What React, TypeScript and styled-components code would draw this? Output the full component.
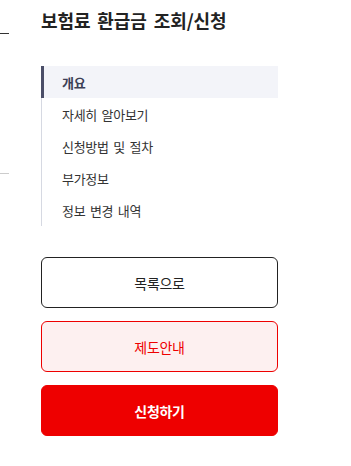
import { createGlobalStyle, styled } from "styled-components";

const GlobalStyle = createGlobalStyle`
  body {
    margin: 0;
    background: #fff;
    font-family: "Noto Sans CJK KR", "Noto Sans", sans-serif;
    color: #222;
  }
`;

const Page = styled.div`
  display: flex;
  align-items: flex-start;
  width: 351px;
  height: 466px;
  overflow: hidden;
`;

// cut-off edge of a side menu that sits left of the viewport
const Rail = styled.div`
  width: 9px;
  display: flex;
  flex-direction: column;
`;

const RailLine = styled.div<{ $top: number; $color: string }>`
  margin-top: ${(p) => p.$top}px;
  height: 1px;
  background: ${(p) => p.$color};
`;

const Main = styled.div`
  margin-left: 32px;
  width: 237px;
  display: flex;
  flex-direction: column;
`;

const Title = styled.h1`
  margin: 0;
  padding-top: 7px;
  font-size: 18px;
  line-height: 26px;
  font-weight: 700;
  letter-spacing: -0.1px;
  word-spacing: 3px;
  color: #222;
  white-space: nowrap;
`;

const Nav = styled.ul`
  list-style: none;
  margin: 33px 0 0;
  padding: 0;
`;

const NavItem = styled.li<{ $active?: boolean }>`
  height: 32px;
  display: flex;
  align-items: center;
  font-size: 13px;
  letter-spacing: -0.3px;
  word-spacing: 2px;
  color: ${(p) => (p.$active ? "#3c3f55" : "#333")};
  font-weight: ${(p) => (p.$active ? 700 : 400)};
  background: ${(p) => (p.$active ? "#f3f4f9" : "transparent")};
  border-left: ${(p) => (p.$active ? "3px solid #4b4e68" : "1px solid #d6d9e2")};
  padding-left: ${(p) => (p.$active ? "18px" : "20px")};
`;

const Buttons = styled.div`
  margin-top: 31px;
  display: flex;
  flex-direction: column;
  gap: 13px;
`;

const Button = styled.button<{ $variant: "line" | "soft" | "solid" }>`
  height: 51px;
  width: 100%;
  border-radius: 6px;
  font-family: inherit;
  font-size: 14px;
  letter-spacing: -0.3px;
  cursor: pointer;
  border: 1px solid
    ${(p) => (p.$variant === "line" ? "#222" : "#ee0000")};
  background: ${(p) =>
    p.$variant === "solid" ? "#ee0000" : p.$variant === "soft" ? "#fdf0f0" : "#fff"};
  color: ${(p) =>
    p.$variant === "solid" ? "#fff" : p.$variant === "soft" ? "#ee0000" : "#222"};
  font-weight: ${(p) => (p.$variant === "solid" ? 700 : 400)};
`;

const menu = ["개요", "자세히 알아보기", "신청방법 및 절차", "부가정보", "정보 변경 내역"];

export default function App() {
  return (
    <Page>
      <GlobalStyle />
      <Rail>
        <RailLine $top={33} $color="#333" />
        <RailLine $top={139} $color="#ccc" />
      </Rail>
      <Main>
        <Title>보험료 환급금 조회/신청</Title>
        <Nav>
          {menu.map((m, i) => (
            <NavItem key={m} $active={i === 0}>
              {m}
            </NavItem>
          ))}
        </Nav>
        <Buttons>
          <Button $variant="line">목록으로</Button>
          <Button $variant="soft">제도안내</Button>
          <Button $variant="solid">신청하기</Button>
        </Buttons>
      </Main>
    </Page>
  );
}
